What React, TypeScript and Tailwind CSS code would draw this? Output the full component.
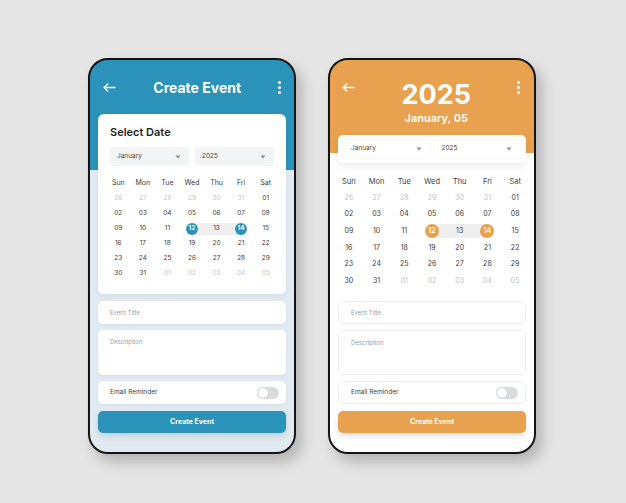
import React from 'react';

const weekdays = ['Sun', 'Mon', 'Tue', 'Wed', 'Thu', 'Fri', 'Sat'];

type Day = { label: string; muted?: boolean; n?: number };

const days: Day[] = [
  ...[26, 27, 28, 29, 30, 31].map((d) => ({ label: String(d), muted: true })),
  ...Array.from({ length: 31 }, (_, i) => ({ label: String(i + 1).padStart(2, '0'), n: i + 1 })),
  ...[1, 2, 3, 4, 5].map((d) => ({ label: String(d).padStart(2, '0'), muted: true })),
];

type Theme = {
  accent: string;
  rowH: string;
  circle: string;
  bar: string;
};

function ArrowLeft() {
  return (
    <svg width="13" height="9" viewBox="0 0 13 9" fill="none" stroke="white" strokeWidth="1.4" strokeLinecap="round" strokeLinejoin="round">
      <path d="M12 4.5H1.2" />
      <path d="M4.8 1 1.2 4.5 4.8 8" />
    </svg>
  );
}

function Kebab() {
  return (
    <div className="flex flex-col gap-[2.5px]">
      <span className="w-[2.6px] h-[2.6px] rounded-full bg-white" />
      <span className="w-[2.6px] h-[2.6px] rounded-full bg-white" />
      <span className="w-[2.6px] h-[2.6px] rounded-full bg-white" />
    </div>
  );
}

function Caret() {
  return (
    <svg width="6" height="4" viewBox="0 0 6 4">
      <path d="M0.5 0.5h5L3 3.5z" fill="#8a8f94" />
    </svg>
  );
}

function Select({ label, className }: { label: string; className: string }) {
  return (
    <div className={`flex-1 flex items-center justify-between rounded-[4px] pl-[7px] pr-[8px] ${className}`}>
      <span className="text-[6.5px] text-[#444]">{label}</span>
      <Caret />
    </div>
  );
}

function Calendar({ theme, big }: { theme: Theme; big?: boolean }) {
  const txt = big ? 'text-[7px]' : 'text-[6.5px]';
  return (
    <div className="grid grid-cols-7">
      {weekdays.map((w) => (
        <div key={w} className={`${theme.rowH} flex items-center justify-center ${big ? 'text-[7.5px]' : 'text-[7px]'} text-[#3d3d3d]`}>
          {w}
        </div>
      ))}
      {days.map((d, i) => {
        const sel = d.n === 12 || d.n === 14;
        let barBg = '';
        if (d.n === 12) barBg = 'bg-[linear-gradient(to_right,transparent_50%,#efefef_50%)]';
        if (d.n === 13) barBg = 'bg-[#efefef]';
        if (d.n === 14) barBg = 'bg-[linear-gradient(to_right,#efefef_50%,transparent_50%)]';
        return (
          <div key={i} className={`${theme.rowH} flex items-center`}>
            <div className={`w-full ${theme.bar} flex items-center justify-center ${barBg}`}>
              {sel ? (
                <span className={`${theme.circle} rounded-full ${theme.accent} flex items-center justify-center ${txt} font-semibold text-white`}>
                  {d.label}
                </span>
              ) : (
                <span className={`${txt} ${d.muted ? 'text-[#c4c4c4]' : 'text-[#3a3a3a]'}`}>{d.label}</span>
              )}
            </div>
          </div>
        );
      })}
    </div>
  );
}

function Form({ accent, boxed }: { accent: string; boxed: string }) {
  return (
    <div className="flex flex-col px-[8px]">
      <div className={`h-[23px] rounded-[5px] bg-white flex items-center px-[12px] ${boxed}`}>
        <span className="text-[6px] text-[#9a9ea3]">Event Title</span>
      </div>
      <div className={`mt-[6px] h-[45px] rounded-[5px] bg-white px-[12px] pt-[8px] ${boxed}`}>
        <span className="block text-[6px] leading-[8px] text-[#9a9ea3]">Description</span>
      </div>
      <div className={`mt-[6px] h-[23px] rounded-[5px] bg-white flex items-center justify-between pl-[12px] pr-[7px] ${boxed}`}>
        <span className="text-[6.5px] text-[#3d3d3d]">Email Reminder</span>
        <div className="w-[22px] h-[12px] rounded-full bg-[#d8dcdf] flex items-center px-[1px]">
          <span className="w-[10px] h-[10px] rounded-full bg-white shadow-[0_0_1px_rgba(0,0,0,0.2)]" />
        </div>
      </div>
      <div className={`mt-[7px] h-[22px] rounded-[5px] ${accent} flex items-center justify-center shadow-[0_3px_6px_rgba(0,0,0,0.12)]`}>
        <span className="text-[7px] font-bold text-white">Create Event</span>
      </div>
    </div>
  );
}

function BluePhone() {
  const theme: Theme = {
    accent: 'bg-[#2b93b9]',
    rowH: 'h-[15px]',
    circle: 'w-[12px] h-[12px]',
    bar: 'h-[12px]',
  };
  return (
    <div className="w-[208px] h-[396px] rounded-[20px] border-2 border-[#141414] overflow-hidden shadow-[6px_8px_14px_rgba(0,0,0,0.22)] bg-[linear-gradient(#2b93b9_0_110px,#e1eaf1_110px)]">
      <div className="h-[54px] pt-[1px] flex items-center px-[13px]">
        <ArrowLeft />
        <div className="flex-1 text-center text-[14px] font-bold text-white">Create Event</div>
        <Kebab />
      </div>
      <div className="mx-[8px] rounded-[6px] bg-white px-[8px] pt-[11px] pb-[13px] shadow-[0_2px_6px_rgba(0,0,0,0.06)]">
        <div className="px-[4px] text-[11px] leading-[14px] font-semibold text-[#1f1f1f]">Select Date</div>
        <div className="px-[4px] mt-[8px] flex gap-[6px] h-[19px]">
          <Select label="January" className="bg-[#f3f4f5]" />
          <Select label="2025" className="bg-[#f3f4f5]" />
        </div>
        <div className="mt-[10px]">
          <Calendar theme={theme} />
        </div>
      </div>
      <div className="mt-[7px]">
        <Form accent="bg-[#2b93b9]" boxed="shadow-[0_1px_3px_rgba(0,0,0,0.05)]" />
      </div>
    </div>
  );
}

function OrangePhone() {
  const theme: Theme = {
    accent: 'bg-[#e8a24f]',
    rowH: 'h-[16.65px]',
    circle: 'w-[14px] h-[14px]',
    bar: 'h-[14px]',
  };
  return (
    <div className="w-[208px] h-[396px] rounded-[20px] border-2 border-[#141414] overflow-hidden shadow-[6px_8px_14px_rgba(0,0,0,0.22)] bg-[linear-gradient(#e8a24f_0_93px,#ffffff_93px)]">
      <div className="flex items-start px-[12px] pt-[20px]">
        <div className="mt-[3px]">
          <ArrowLeft />
        </div>
        <div className="flex-1 flex flex-col items-center">
          <div className="text-[27px] leading-[30px] font-bold text-white">2025</div>
          <div className="mt-[1px] text-[11px] leading-[14px] font-semibold text-white">January, 05</div>
        </div>
        <div className="mt-[1px] mr-[2px]">
          <Kebab />
        </div>
      </div>
      <div className="mx-[8px] mt-[10px] h-[28px] rounded-[5px] bg-white px-[6px] flex items-center gap-[5px] shadow-[0_3px_8px_rgba(0,0,0,0.08)]">
        <div className="flex-1 flex gap-[5px] h-[18px]">
          <Select label="January" className="bg-white shadow-[0_0_3px_rgba(0,0,0,0.08)]" />
          <Select label="2025" className="bg-white shadow-[0_0_3px_rgba(0,0,0,0.08)]" />
        </div>
      </div>
      <div className="mt-[10px] px-[5px]">
        <Calendar theme={theme} big />
      </div>
      <div className="mt-[12px]">
        <Form accent="bg-[#e8a24f]" boxed="border border-[#ececec]" />
      </div>
    </div>
  );
}

export default function App() {
  return (
    <div className="w-[626px] h-[503px] bg-[#e5e5e5] flex gap-[32px] pl-[88px] pt-[58px]" style={{ fontFamily: 'Inter, "Noto Sans", sans-serif' }}>
      <BluePhone />
      <OrangePhone />
    </div>
  );
}
